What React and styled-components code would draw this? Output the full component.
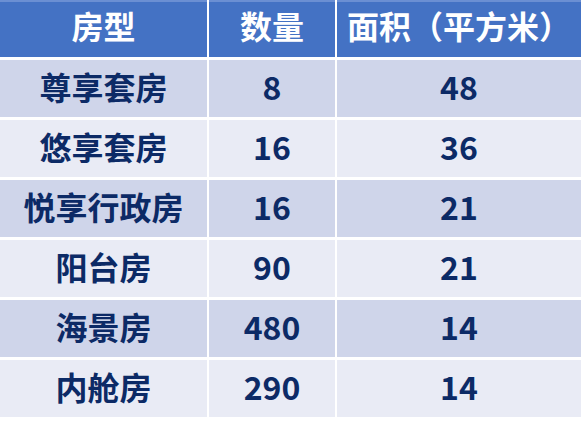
import React from "react";
import styled, { createGlobalStyle } from "styled-components";

const GlobalStyle = createGlobalStyle`
  body {
    margin: 0;
    background: #ffffff;
    font-family: "Noto Sans CJK SC", "Noto Sans", sans-serif;
  }
`;

const Table = styled.div`
  display: grid;
  grid-template-columns: 207px 126px 1fr;
  grid-template-rows: 57px repeat(6, 57px);
  column-gap: 2px;
  row-gap: 3px;
  width: 581px;
  background: #ffffff;
`;

const HeadCell = styled.div`
  display: flex;
  align-items: center;
  justify-content: center;
  background: #4472c4;
  border-top: 2px solid #6b8fd3;
  color: #ffffff;
  font-size: 32px;
  font-weight: 700;
  line-height: 1;
  padding-bottom: 9px;
`;

const Cell = styled.div`
  display: flex;
  align-items: center;
  justify-content: center;
  background: ${(p) => (p.$odd ? "#cfd5ea" : "#e9ebf5")};
  color: #0c2a66;
  font-size: 32px;
  font-weight: 700;
  line-height: 1;
  padding-bottom: 6px;
`;

const rows = [
  ["尊享套房", "8", "48"],
  ["悠享套房", "16", "36"],
  ["悦享行政房", "16", "21"],
  ["阳台房", "90", "21"],
  ["海景房", "480", "14"],
  ["内舱房", "290", "14"],
];

export default function App() {
  return (
    <>
      <GlobalStyle />
      <Table>
        <HeadCell>房型</HeadCell>
        <HeadCell>数量</HeadCell>
        <HeadCell>面积（平方米）</HeadCell>
        {rows.map((r, i) =>
          r.map((v, j) => (
            <Cell key={`${i}-${j}`} $odd={i % 2 === 0}>
              {v}
            </Cell>
          ))
        )}
      </Table>
    </>
  );
}
